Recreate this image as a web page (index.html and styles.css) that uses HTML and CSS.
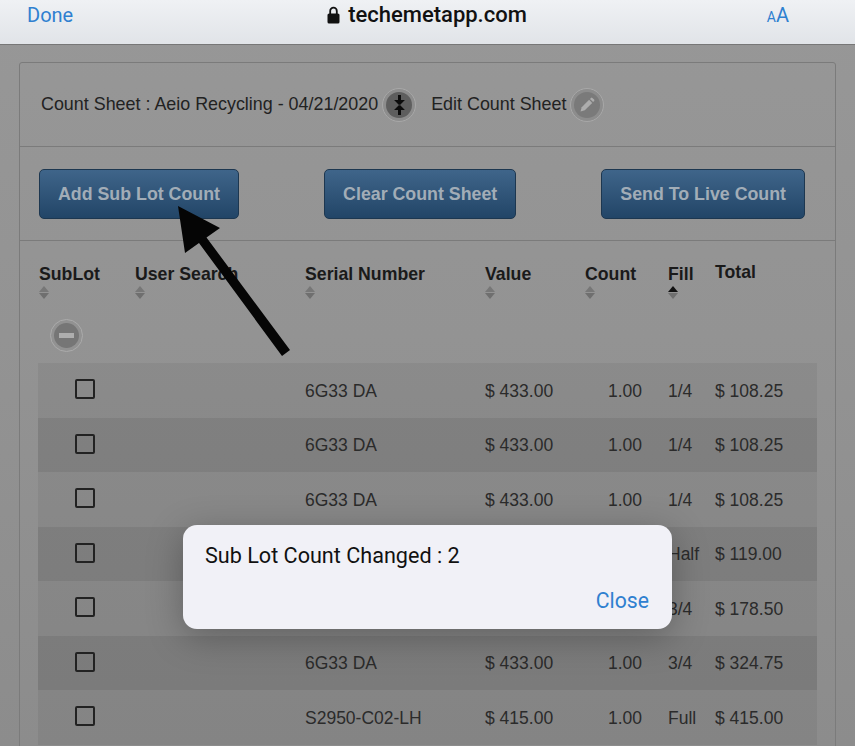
FILE: index.html
```html
<!DOCTYPE html>
<html lang="en">
<head>
<meta charset="utf-8">
<title>Count Sheet</title>
<link rel="stylesheet" href="styles.css">
</head>
<body>
<header class="browser-bar">
  <span class="done">Done</span>
  <span class="address">
    <svg class="lock" viewBox="0 0 13 18" width="13" height="18"><path d="M3.200 8V5a3.300 3.300 0 0 1 6.600 0V8" fill="none" stroke="#111" stroke-width="1.800"/><rect x="0.500" y="7.500" width="12" height="10" rx="1.600" fill="#111"/></svg>
    techemetapp.com
  </span>
  <span class="text-size"><small>A</small>A</span>
</header>
<main class="page">
  <section class="panel">
    <div class="panel-title">
      <span>Count Sheet : Aeio Recycling - 04/21/2020</span>
      <span class="round-btn"><span class="round-inner dark"><svg viewBox="0 0 18 24" width="15" height="20"><path d="M9 0v8M9 24v-8" stroke="#0c0c0c" stroke-width="3.600"/><path d="M2.500 6h13L9 12.500zM2.500 18h13L9 11.500z" fill="#0c0c0c"/></svg></span></span>
      <span class="edit-label">Edit Count Sheet</span>
      <span class="round-btn"><span class="round-inner"><svg viewBox="0 0 18 18" width="18" height="18"><path d="M2.500 15.500l1.200-4.300 7.400-7.400 3.100 3.100-7.400 7.400z" fill="#adadad"/><path d="M12 2.900l1-1a1 1 0 0 1 1.400 0l1.700 1.700a1 1 0 0 1 0 1.400l-1 1z" fill="#adadad"/></svg></span></span>
    </div>
    <div class="actions">
      <button class="action">Add Sub Lot Count</button>
      <button class="action">Clear Count Sheet</button>
      <button class="action">Send To Live Count</button>
    </div>
    <div class="table-wrap">
      <div class="row head">
        <div class="th">SubLot<i class="sort"></i></div>
        <div class="th">User Search<i class="sort"></i></div>
        <div class="th">Serial Number<i class="sort"></i></div>
        <div class="th">Value<i class="sort"></i></div>
        <div class="th">Count<i class="sort"></i></div>
        <div class="th">Fill<i class="sort asc"></i></div>
        <div class="th total-head">Total</div>
      </div>
      <div class="tool-row"><span class="minus"><b></b></span></div>
      <div class="row item"><div class="check"><i></i></div><div></div><div>6G33 DA</div><div>$ 433.00</div><div class="num">1.00</div><div>1/4</div><div>$ 108.25</div></div>
      <div class="row item"><div class="check"><i></i></div><div></div><div>6G33 DA</div><div>$ 433.00</div><div class="num">1.00</div><div>1/4</div><div>$ 108.25</div></div>
      <div class="row item"><div class="check"><i></i></div><div></div><div>6G33 DA</div><div>$ 433.00</div><div class="num">1.00</div><div>1/4</div><div>$ 108.25</div></div>
      <div class="row item"><div class="check"><i></i></div><div></div><div>6G33 DA</div><div>$ 476.00</div><div class="num">1.00</div><div>Half</div><div>$ 119.00</div></div>
      <div class="row item"><div class="check"><i></i></div><div></div><div>6G33 DA</div><div>$ 238.00</div><div class="num">1.00</div><div>3/4</div><div>$ 178.50</div></div>
      <div class="row item"><div class="check"><i></i></div><div></div><div>6G33 DA</div><div>$ 433.00</div><div class="num">1.00</div><div>3/4</div><div>$ 324.75</div></div>
      <div class="row item"><div class="check"><i></i></div><div></div><div>S2950-C02-LH</div><div>$ 415.00</div><div class="num">1.00</div><div>Full</div><div>$ 415.00</div></div>
    </div>
  </section>
</main>
<svg class="arrow" viewBox="0 0 855 746" width="855" height="746"><path d="M178 206L220 228L206.500 237.500L290 350L282 356L199 243L185 253Z" fill="#050505"/></svg>
<div class="alert">
  <p class="alert-text">Sub Lot Count Changed : 2</p>
  <div class="alert-foot"><span class="close">Close</span></div>
</div>
</body>
</html>
```
FILE: styles.css
```css
* { box-sizing: border-box; }
html, body { margin: 0; height: 746px; overflow: hidden; }
body {
  font-family: "Liberation Sans", Arial, sans-serif;
  color: #1d1d1d;
  background: linear-gradient(#979797, #939393 45%, #8c8c8c);
  position: relative;
}
.browser-bar {
  height: 45px;
  padding: 0 66px 15px 27px;
  display: flex;
  align-items: center;
  justify-content: space-between;
  background: linear-gradient(#eff1f4, #e1e4e8);
  border-bottom: 1px solid #777;
  font-family: Roboto, "Liberation Sans", sans-serif;
}
.done { color: #2f80d0; font-size: 20px; }
.address { display: flex; align-items: center; gap: 8px; font-size: 22px; font-weight: 500; color: #111; margin-left: 14px; }
.lock { flex: none; }
.text-size { color: #2f80d0; font-size: 20px; }
.text-size small { font-size: 14px; }
.page { padding: 17px 19px 0; }
.panel { border: 1px solid #7b7b7b; border-radius: 3px; height: 720px; }
.panel-title {
  height: 84px;
  padding: 0 21px;
  display: flex;
  align-items: center;
  font-size: 17.900px;
  color: #222;
  border-bottom: 1px solid #7b7b7b;
}
.round-btn {
  width: 34px;
  height: 34px;
  margin-left: 4px;
  border-radius: 50%;
  border: 1px solid #a8a8a8;
  background: #8d8d8d;
  display: flex;
  align-items: center;
  justify-content: center;
}
.round-inner {
  width: 26px;
  height: 26px;
  border-radius: 50%;
  background: #7a7a7a;
  display: flex;
  align-items: center;
  justify-content: center;
}
.round-inner.dark { background: #5e5e5e; }
.edit-label { margin-left: 15px; }
.actions {
  height: 94px;
  padding: 22px 30px 0 19px;
  display: flex;
  justify-content: space-between;
  align-items: flex-start;
  border-bottom: 1px solid #7b7b7b;
}
.action {
  height: 50px;
  padding: 0 18px;
  border: 1px solid #1d3750;
  border-radius: 5px;
  background: linear-gradient(#3f658a, #224567);
  color: #a2adb7;
  font: bold 17.800px "Liberation Sans", Arial, sans-serif;
}
.table-wrap { padding: 0 18px; }
.row {
  display: grid;
  grid-template-columns: 96px 170px 180px 100px 83px 47px 102px;
  padding-left: 1px;
}
.head { height: 62px; padding-top: 23px; font-weight: bold; font-size: 17.700px; color: #1a1a1a; line-height: 20px; }
.th { display: flex; flex-direction: column; align-items: flex-start; }
.total-head { margin-top: -2px; }
.sort { display: block; width: 11px; height: 13px; margin-top: 2px; position: relative; }
.sort::before, .sort::after {
  content: "";
  position: absolute;
  left: 0;
  border-left: 5.500px solid transparent;
  border-right: 5.500px solid transparent;
}
.sort::before { top: 0; border-bottom: 6px solid #777; }
.sort::after { bottom: 0; border-top: 6px solid #6f6f6f; }
.sort.asc::before { border-bottom-color: #111; }
.tool-row { height: 60px; padding: 16px 0 0 12px; }
.minus {
  width: 33px;
  height: 33px;
  border-radius: 50%;
  border: 1px solid #ababab;
  background: #929292;
  display: flex;
  align-items: center;
  justify-content: center;
}
.minus b {
  width: 25px;
  height: 25px;
  border-radius: 50%;
  background: #767676;
  display: flex;
  align-items: center;
  justify-content: center;
}
.minus b::before { content: ""; width: 15px; height: 5px; background: #aeaeae; }
.item { height: 54.500px; align-items: center; font-size: 17.500px; color: #2b2b2b; background: rgba(0, 0, 0, 0.12); }
.item:nth-child(odd) { background: rgba(0, 0, 0, 0.05); }
.item > div { margin-top: 2px; }
.item > .check { margin-top: 0; margin-bottom: 2px; padding-left: 36px; display: flex; }
.check i { width: 20px; height: 20px; border: 2px solid #222; border-radius: 2px; }
.num { text-align: right; padding-right: 26px; }
.arrow { position: absolute; left: 0; top: 0; pointer-events: none; }
.alert {
  position: absolute;
  left: 183px;
  top: 525px;
  width: 489px;
  height: 104px;
  padding: 18px 23px 0 22px;
  border-radius: 14px;
  background: #f1f1f7;
  box-shadow: 0 8px 36px rgba(0, 0, 0, 0.28);
  font-family: Roboto, "Liberation Sans", sans-serif;
  display: flex;
  flex-direction: column;
  justify-content: space-between;
}
.alert-text { margin: 0; font-size: 21.600px; color: #111; line-height: 26px; }
.alert-foot { text-align: right; padding-bottom: 16px; }
.close { color: #2f80d0; font-size: 21.200px; }
```
